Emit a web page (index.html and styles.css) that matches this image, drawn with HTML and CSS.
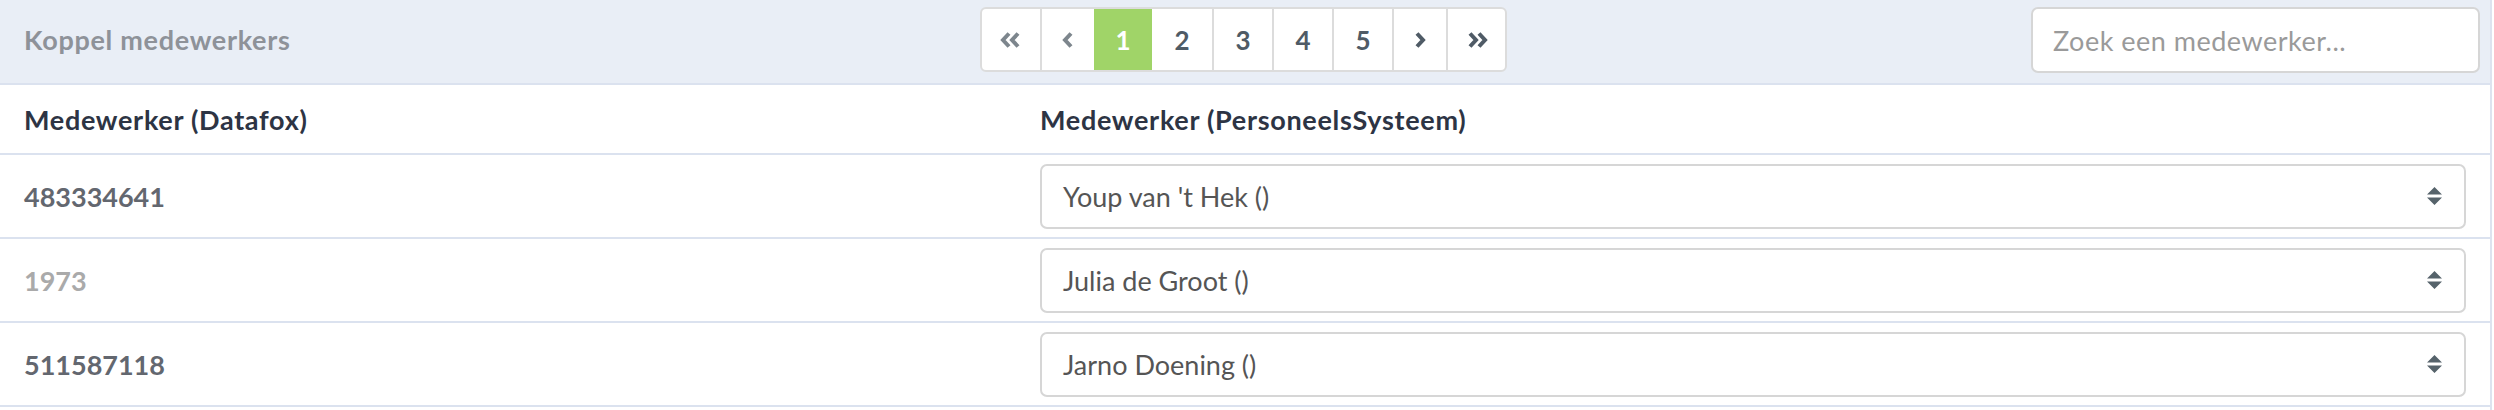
FILE: index.html
```html
<!DOCTYPE html>
<html lang="nl">
<head>
    <meta charset="UTF-8">
    <title>Koppel medewerkers</title>
    <link rel="stylesheet" href="styles.css">
</head>
<body>
    <div class="panel">
        <div class="panel-heading">
            <div class="panel-title">Koppel medewerkers</div>
            <ul class="pagination">
                <li class="page-first disabled">
                    <svg width="22" height="16" viewBox="0 0 22 16"><path d="M9 1.5 L3 8 L9 14.5 M18 1.5 L12 8 L18 14.5" fill="none" stroke="currentColor" stroke-width="4"/></svg>
                </li>
                <li class="page-prev disabled">
                    <svg width="12" height="16" viewBox="0 0 12 16"><path d="M9 1.5 L3 8 L9 14.5" fill="none" stroke="currentColor" stroke-width="4"/></svg>
                </li>
                <li class="page-num active">1</li>
                <li class="page-num">2</li>
                <li class="page-num">3</li>
                <li class="page-num">4</li>
                <li class="page-num">5</li>
                <li class="page-next">
                    <svg width="12" height="16" viewBox="0 0 12 16"><path d="M3 1.5 L9 8 L3 14.5" fill="none" stroke="currentColor" stroke-width="4"/></svg>
                </li>
                <li class="page-last">
                    <svg width="22" height="16" viewBox="0 0 22 16"><path d="M4 1.5 L10 8 L4 14.5 M13 1.5 L19 8 L13 14.5" fill="none" stroke="currentColor" stroke-width="4"/></svg>
                </li>
            </ul>
            <div class="search">
                <input type="text" placeholder="Zoek een medewerker...">
            </div>
        </div>

        <table class="link-table">
            <tr>
                <th class="col-datafox">Medewerker (Datafox)</th>
                <th>Medewerker (PersoneelsSysteem)</th>
            </tr>
            <tr>
                <td class="emp-id">483334641</td>
                <td>
                    <div class="select">
                        <span>Youp van 't Hek ()</span>
                        <svg class="caret" width="15" height="20" viewBox="0 0 15 20"><path d="M7.5 1 L15 8.5 L0 8.5 Z M0 11.5 L15 11.5 L7.5 19 Z" fill="#56636b"/></svg>
                    </div>
                </td>
            </tr>
            <tr>
                <td class="emp-id muted">1973</td>
                <td>
                    <div class="select">
                        <span>Julia de Groot ()</span>
                        <svg class="caret" width="15" height="20" viewBox="0 0 15 20"><path d="M7.5 1 L15 8.5 L0 8.5 Z M0 11.5 L15 11.5 L7.5 19 Z" fill="#56636b"/></svg>
                    </div>
                </td>
            </tr>
            <tr>
                <td class="emp-id">511587118</td>
                <td>
                    <div class="select">
                        <span>Jarno Doening ()</span>
                        <svg class="caret" width="15" height="20" viewBox="0 0 15 20"><path d="M7.5 1 L15 8.5 L0 8.5 Z M0 11.5 L15 11.5 L7.5 19 Z" fill="#56636b"/></svg>
                    </div>
                </td>
            </tr>
        </table>
    </div>
</body>
</html>
```

FILE: styles.css
```css
body, html {
    margin: 0;
    background: #fff;
    font-family: 'Lato', 'Liberation Sans', sans-serif;
}
.panel {
    width: 2492px;
    box-sizing: border-box;
    border-right: 2px solid #dde3ef;
    min-height: 410px;
}
.panel-heading {
    height: 85px;
    box-sizing: border-box;
    background-color: #e9eef6;
    border-bottom: 2px solid #dbe2ef;
    display: flex;
    align-items: flex-start;
    padding: 7px 10px 0 24px;
}
.panel-title {
    width: 956px;
    font-size: 27px;
    font-weight: 700;
    letter-spacing: 0.7px;
    color: #8e9299;
    line-height: 65px;
}
.pagination {
    list-style-type: none;
    margin: 0;
    padding: 0;
    display: flex;
    border: 2px solid #dcdcdc;
    border-radius: 6px;
    background: #fff;
    height: 65px;
    box-sizing: border-box;
}
.pagination li {
    width: 60px;
    box-sizing: border-box;
    display: flex;
    align-items: center;
    justify-content: center;
    font-size: 26px;
    font-weight: 700;
    color: #4f5b66;
    border-left: 2px solid #dcdcdc;
}
.pagination li:first-child {
    border-left: none;
    width: 58px;
}
.pagination .page-prev,
.pagination .page-next {
    width: 54px;
}
.pagination .page-last {
    width: 59px;
}
.pagination li.disabled {
    color: #7d868d;
}
.pagination li.active {
    background-color: #a0d468;
    color: #fff;
    border-left: none;
    width: 58px;
}
.pagination li.active + li {
    border-left: none;
}
.search {
    margin-left: auto;
}
.search input {
    width: 449px;
    height: 66px;
    box-sizing: border-box;
    border: 2px solid #d6d6d6;
    border-radius: 7px;
    padding: 0 20px;
    font-family: inherit;
    font-size: 27px;
    letter-spacing: 0.5px;
    color: #555;
    outline: none;
}
.search input::placeholder {
    color: #9a9a9a;
}
.link-table {
    width: 100%;
    border-collapse: collapse;
}
th, td {
    text-align: left;
    padding: 0 24px;
    border-bottom: 2px solid #dbe2ef;
}
th {
    height: 68px;
    font-size: 27px;
    font-weight: 700;
    letter-spacing: 0.7px;
    color: #2d3444;
}
td {
    height: 82px;
}
.col-datafox {
    width: 968px;
}
.emp-id {
    font-size: 27px;
    font-weight: 700;
    color: #63676f;
}
.emp-id.muted {
    color: #aaaaaa;
}
.select {
    height: 65px;
    box-sizing: border-box;
    border: 2px solid #d6d6d6;
    border-radius: 7px;
    display: flex;
    align-items: center;
    justify-content: space-between;
    padding: 0 22px 0 21px;
    font-size: 27px;
    color: #555;
}
```
